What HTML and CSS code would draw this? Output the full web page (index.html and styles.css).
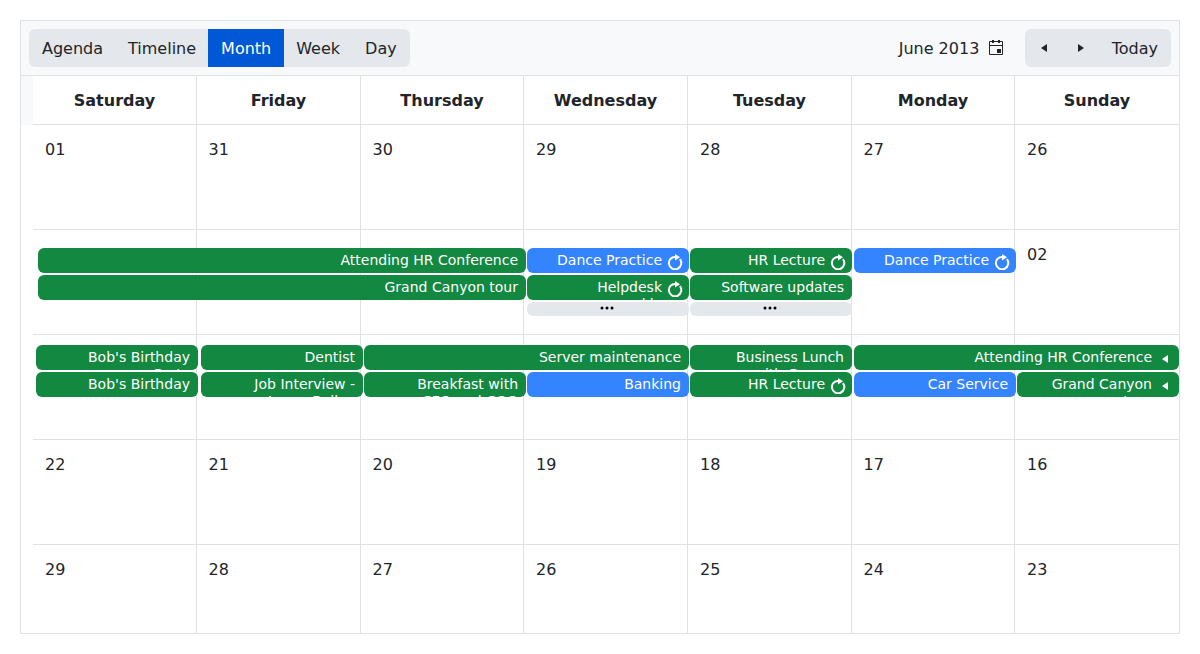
FILE: index.html
```html
<!DOCTYPE html>
<html lang="en">
<head>
<meta charset="utf-8">
<title>Scheduler</title>
<link rel="stylesheet" href="styles.css">
</head>
<body>
<svg width="0" height="0" class="defs">
  <symbol id="rotate" viewBox="0 0 16 16"><path d="M8.5 2.9 A6.2 6.2 0 1 0 12.9 5.2" fill="none" stroke="currentColor" stroke-width="2"/><path d="M8 0 L13 3.3 L8 6.6Z" fill="currentColor"/></symbol>
  <symbol id="left" viewBox="0 0 16 16"><path d="M11 4v8L5 8z" fill="currentColor"/></symbol>
  <symbol id="right" viewBox="0 0 16 16"><path d="M5 4v8l6-4z" fill="currentColor"/></symbol>
  <symbol id="dots" viewBox="0 0 16 16"><circle cx="3" cy="8" r="1.5"/><circle cx="8" cy="8" r="1.5"/><circle cx="13" cy="8" r="1.5"/></symbol>
</svg>
<main class="scheduler">
  <header class="toolbar">
    <nav class="group views"><button>Agenda</button><button>Timeline</button><button class="selected">Month</button><button>Week</button><button>Day</button></nav>
    <span class="current"><span>June 2013</span><svg class="icon" viewBox="0 0 16 16"><path d="M1.5 1.5h13v13h-13zM1.5 5.5h13" fill="none" stroke="currentColor"/><path d="M4 0h2v3H4zM10 0h2v3h-2zM9 9h4v4H9z" fill="currentColor"/></svg></span>
    <nav class="group"><button class="arrow"><svg class="icon"><use href="#left"/></svg></button><button class="arrow"><svg class="icon"><use href="#right"/></svg></button><button>Today</button></nav>
  </header>
  <section class="calendar">
    <div class="gutter"></div>
    <div class="month">
      <div class="week days"><b>Saturday</b><b>Friday</b><b>Thursday</b><b>Wednesday</b><b>Tuesday</b><b>Monday</b><b>Sunday</b></div>
      <div class="week"><span>01</span><span>31</span><span>30</span><span>29</span><span>28</span><span>27</span><span>26</span></div>
      <div class="week"><span></span><span></span><span></span><span></span><span></span><span></span><span>02</span>
        <div class="event span3 first" style="left:5px">Attending HR Conference</div>
        <div class="event blue first" style="left:494px">Dance Practice<svg class="icon"><use href="#rotate"/></svg></div>
        <div class="event first" style="left:657px">HR Lecture<svg class="icon"><use href="#rotate"/></svg></div>
        <div class="event blue first" style="left:821px">Dance Practice<svg class="icon"><use href="#rotate"/></svg></div>
        <div class="event span3 second" style="left:5px">Grand Canyon tour</div>
        <div class="event second" style="left:494px"><p>Helpdesk<br>weekly</p><svg class="icon"><use href="#rotate"/></svg></div>
        <div class="event second" style="left:657px">Software updates</div>
        <div class="more" style="left:494px"><svg class="icon"><use href="#dots"/></svg></div>
        <div class="more" style="left:657px"><svg class="icon"><use href="#dots"/></svg></div>
      </div>
      <div class="week upper"><span></span><span></span><span></span><span></span><span></span><span></span><span></span>
        <div class="event first" style="left:3px"><p>Bob's Birthday<br>Party</p></div>
        <div class="event first" style="left:168px">Dentist</div>
        <div class="event span2 first" style="left:331px">Server maintenance</div>
        <div class="event first" style="left:657px"><p>Business Lunch<br>with Gregory</p></div>
        <div class="event span2 first" style="left:821px">Attending HR Conference<svg class="icon"><use href="#left"/></svg></div>
        <div class="event second" style="left:3px">Bob's Birthday</div>
        <div class="event second" style="left:168px"><p>Job Interview -<br>Laura Bailey</p></div>
        <div class="event second" style="left:331px"><p>Breakfast with<br>CFO and COO</p></div>
        <div class="event blue second" style="left:494px">Banking</div>
        <div class="event second" style="left:657px">HR Lecture<svg class="icon"><use href="#rotate"/></svg></div>
        <div class="event blue second" style="left:821px">Car Service</div>
        <div class="event second" style="left:984px"><p>Grand Canyon<br>tour</p><svg class="icon"><use href="#left"/></svg></div>
      </div>
      <div class="week"><span>22</span><span>21</span><span>20</span><span>19</span><span>18</span><span>17</span><span>16</span></div>
      <div class="week"><span>29</span><span>28</span><span>27</span><span>26</span><span>25</span><span>24</span><span>23</span></div>
    </div>
  </section>
</main>
</body>
</html>
```
FILE: styles.css
```css
* { box-sizing: border-box; }
body { margin: 20px; background: #fff; color: #212529; font: 16px/24px "DejaVu Sans", sans-serif; }
.defs { position: absolute; }
.icon { width: 16px; height: 16px; flex: none; }
.scheduler { width: 1160px; height: 614px; border: 1px solid #dee2e6; overflow: hidden; }
.toolbar { height: 55px; padding: 8px; display: flex; align-items: center; background: #f8f9fb; border-bottom: 1px solid #dee2e6; }
.group { display: flex; height: 38px; border-radius: 6px; overflow: hidden; background: #e4e7eb; }
.views { margin-right: auto; }
.group button { border: 0; padding: 2px 13px 0; background: none; color: inherit; font: inherit; display: flex; align-items: center; }
.group button + button { margin-left: -1px; }
.group .selected { background: #0058d6; color: #fff; }
.group .arrow { width: 38px; padding: 0; justify-content: center; }
.current { display: flex; align-items: center; gap: 8.4px; margin-right: 21px; }
.current span { padding-top: 2px; }
.calendar { display: flex; }
.gutter { width: 12px; height: 49px; background: #f8f9fb; }
.month { width: 1146px; }
.week { position: relative; height: 105px; display: grid; grid-template-columns: 163px 164px 163px 164px 164px 163px 165px; border-bottom: 1px solid #dee2e6; }
.week span { padding: 13px 12px 12px; border-left: 1px solid #dee2e6; }
.week span:nth-child(2), .week span:nth-child(3), .week span:nth-child(6) { padding-left: 11.6px; }
.week > :first-child { border-left: 0; }
.days { height: 49px; }
.days b { padding-top: 13px; text-align: center; border-left: 1px solid #dee2e6; }
.event { position: absolute; width: 162px; height: 25px; padding: 4px 8px 0; border-radius: 6px; overflow: hidden; background: #138841; color: #fff; font-size: 14px; line-height: 17px; text-align: right; display: flex; justify-content: flex-end; }
.event p { margin: 0; }
.event .icon { margin: 2px -2px 0 5px; }
.blue { background: #3584ff; }
.span2 { width: 325px; }
.span3 { width: 488px; }
.first { top: 18px; }
.second { top: 45px; }
.upper .first { top: 10px; }
.upper .second { top: 37px; }
.more { position: absolute; top: 72px; width: 162px; height: 14px; padding: 0 2px 2px 0; border-radius: 6px; background: #e4e7eb; display: flex; justify-content: center; align-items: center; }
```
